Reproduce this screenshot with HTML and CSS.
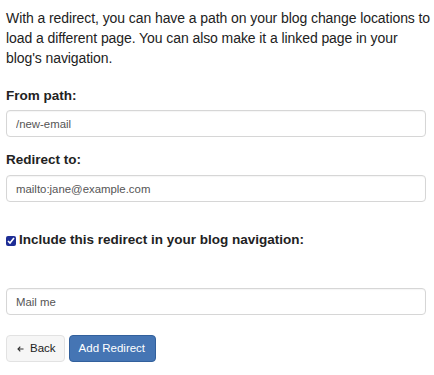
FILE: index.html
```html
<!DOCTYPE html>
<html>
<head>
<meta charset="utf-8">
<link rel="stylesheet" href="styles.css">
</head>
<body>
<form class="form">
  <p class="intro">With a redirect, you can have a path on your blog change locations to load a different page. You can also make it a linked page in your blog's navigation.</p>
  <label class="label label-first">From path:</label>
  <input class="field" type="text" value="/new-email">
  <label class="label label-second">Redirect to:</label>
  <input class="field" type="text" value="mailto:jane@example.com">
  <label class="check-row"><input class="check" type="checkbox" checked><span>Include this redirect in your blog navigation:</span></label>
  <input class="field field-nav" type="text" value="Mail me">
  <div class="actions">
    <button type="button" class="btn btn-back"><svg class="arrow" width="7" height="6" viewBox="0 0 7 6"><path d="M6.5 3H1M3.3 0.7L1 3l2.3 2.3" fill="none" stroke="#333" stroke-width="1.1"/></svg>Back</button>
    <button type="button" class="btn btn-primary">Add Redirect</button>
  </div>
</form>
</body>
</html>
```
FILE: styles.css
```css
html, body {
  margin: 0;
  background: #fff;
}
body {
  padding: 8px 8px 0 6px;
  font-family: "Liberation Sans", Arial, sans-serif;
  color: #222;
}
.form {
  display: flex;
  flex-direction: column;
  align-items: stretch;
}
.intro {
  margin: 0 -7px 0 0;
  font-size: 14px;
  line-height: 20px;
  letter-spacing: -0.08px;
}
.label {
  display: block;
  font-weight: 700;
  font-size: 13.5px;
  line-height: 20px;
  margin-bottom: 4px;
}
.label-first { margin-top: 18px; }
.label-second { margin-top: 13px; margin-bottom: 5px; }
.field {
  box-sizing: border-box;
  height: 27px;
  width: 100%;
  margin: 0;
  padding: 0 9px;
  border: 1px solid #d6d6d6;
  border-radius: 4px;
  font-family: "Liberation Sans", Arial, sans-serif;
  font-size: 11.4px;
  color: #555;
  background: #fff;
  box-shadow: inset 0 1px 1px rgba(0,0,0,0.04);
}
.check-row {
  display: flex;
  align-items: center;
  margin-top: 28px;
  font-weight: 700;
  font-size: 13.5px;
  line-height: 20px;
}
.check {
  width: 10px;
  height: 10px;
  margin: 1px 3px 0 0;
  accent-color: #1e2d95;
}
.field-nav { margin-top: 38px; }
.actions {
  display: flex;
  gap: 4px;
  margin-top: 20px;
}
.btn {
  box-sizing: border-box;
  height: 27px;
  border-radius: 4px;
  font-family: "Liberation Sans", Arial, sans-serif;
  font-size: 11.5px;
  line-height: 25px;
  white-space: nowrap;
  display: flex;
  align-items: center;
}
.btn-back {
  background: #f6f6f6;
  border: 1px solid #e2e2e2;
  color: #222;
  padding: 0 8px 0 10px;
}
.arrow {
  margin-right: 6px;
}
.btn-primary {
  background: #4575b4;
  border: 1px solid #32609c;
  color: #fff;
  padding: 0 10px 0 9px;
}
```
